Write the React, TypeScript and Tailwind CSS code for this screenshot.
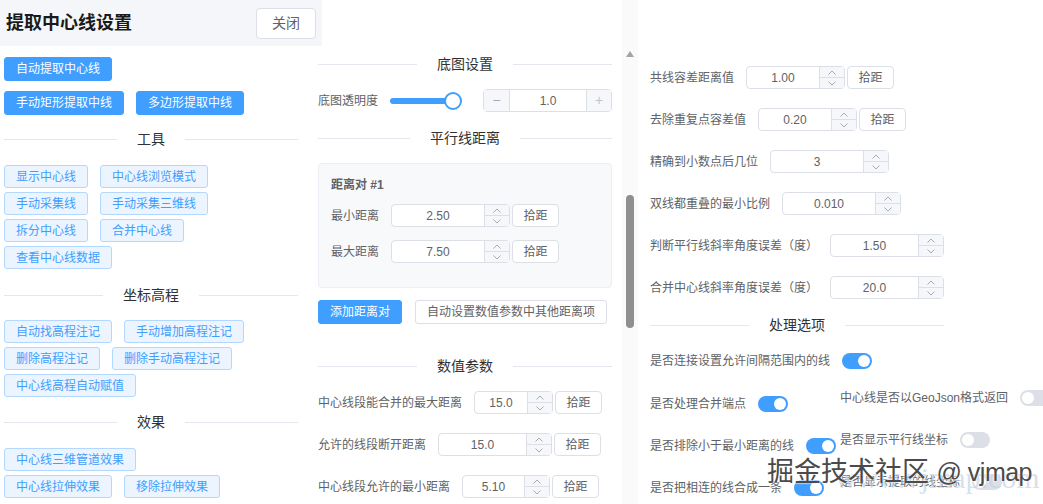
import React from 'react';

const Divider = ({ label }: { label: string }) => (
  <div className="flex h-[20px] w-[294px] items-center">
    <div className="h-px flex-1 bg-[#e4e7ed]" />
    <span className="px-5 text-[14px] leading-none text-[#303133]">{label}</span>
    <div className="h-px flex-1 bg-[#e4e7ed]" />
  </div>
);

const SolidBtn = ({ children }: { children: React.ReactNode }) => (
  <button className="flex h-[24px] items-center rounded-[3px] border border-[#409eff] bg-[#409eff] px-[11px] text-[12px] leading-none text-white">
    {children}
  </button>
);

const PlainBtn = ({ children }: { children: React.ReactNode }) => (
  <button className="flex h-[23px] items-center rounded-[3px] border border-[#b3d8ff] bg-[#ecf5ff] px-[11px] text-[12px] leading-none text-[#409eff]">
    {children}
  </button>
);

const Chevron = ({ up }: { up?: boolean }) => (
  <svg width="8" height="5" viewBox="0 0 8 5" fill="none" stroke="#a8abb2" strokeWidth="1">
    {up ? <path d="M0.5 4.5 L4 1 L7.5 4.5" /> : <path d="M0.5 0.5 L4 4 L7.5 0.5" />}
  </svg>
);

const NumInput = ({ w, value }: { w: string; value: string }) => (
  <div className={`flex h-[23px] ${w} shrink-0 rounded-[4px] border border-[#dcdfe6] bg-white`}>
    <div className="flex flex-1 items-center justify-center text-[12px] text-[#606266]">{value}</div>
    <div className="flex w-[25px] flex-col border-l border-[#dcdfe6] bg-[#f5f7fa]">
      <div className="flex flex-1 items-center justify-center border-b border-[#dcdfe6]">
        <Chevron up />
      </div>
      <div className="flex flex-1 items-center justify-center">
        <Chevron />
      </div>
    </div>
  </div>
);

const PickBtn = () => (
  <button className="ml-[2px] flex h-[23px] w-[47px] shrink-0 items-center justify-center rounded-[4px] border border-[#dcdfe6] bg-white text-[12px] text-[#606266]">
    拾距
  </button>
);

const Row = ({ label, w, value, pick = true }: { label: string; w: string; value: string; pick?: boolean }) => (
  <div className="flex h-[23px] items-center">
    <span className="mr-[12px] whitespace-nowrap text-[12px] text-[#606266]">{label}</span>
    <NumInput w={w} value={value} />
    {pick && <PickBtn />}
  </div>
);

const Switch = ({ on }: { on?: boolean }) => (
  <div
    className={`relative h-[16px] w-[30px] shrink-0 rounded-full ${on ? 'bg-[#409eff]' : 'bg-[#dcdfe6]'}`}
  >
    <div className={`absolute top-[2px] h-[12px] w-[12px] rounded-full bg-white ${on ? 'right-[2px]' : 'left-[2px]'}`} />
  </div>
);

const SwitchItem = ({ label, on }: { label: string; on?: boolean }) => (
  <div className="flex h-[20px] items-center">
    <span className="mr-[12px] whitespace-nowrap text-[12px] text-[#606266]">{label}</span>
    <Switch on={on} />
  </div>
);

export default function App() {
  return (
    <div className="relative flex h-[504px] w-[1043px] overflow-hidden bg-white [font-family:'Liberation_Sans','Noto_Sans_CJK_SC',sans-serif]">
      {/* left panel */}
      <div className="w-[318px] shrink-0">
        <div className="flex h-[46px] w-[322px] items-center justify-between bg-[#f4f6f9] px-[6px]">
          <span className="text-[18px] font-bold text-[#1a1a1a]">提取中心线设置</span>
          <button className="h-[31px] w-[60px] rounded-[4px] border border-[#dcdfe6] bg-white text-[14px] text-[#606266]">
            关闭
          </button>
        </div>
        <div className="pl-[4px] pt-[11px]">
          <div className="flex">
            <SolidBtn>自动提取中心线</SolidBtn>
          </div>
          <div className="mt-[10px] flex gap-[12px]">
            <SolidBtn>手动矩形提取中线</SolidBtn>
            <SolidBtn>多边形提取中线</SolidBtn>
          </div>
          <div className="mt-[14px]">
            <Divider label="工具" />
          </div>
          <div className="mt-[16px] flex flex-col gap-[4px]">
            <div className="flex gap-[12px]">
              <PlainBtn>显示中心线</PlainBtn>
              <PlainBtn>中心线浏览模式</PlainBtn>
            </div>
            <div className="flex gap-[12px]">
              <PlainBtn>手动采集线</PlainBtn>
              <PlainBtn>手动采集三维线</PlainBtn>
            </div>
            <div className="flex gap-[12px]">
              <PlainBtn>拆分中心线</PlainBtn>
              <PlainBtn>合并中心线</PlainBtn>
            </div>
            <div className="flex">
              <PlainBtn>查看中心线数据</PlainBtn>
            </div>
          </div>
          <div className="mt-[16px]">
            <Divider label="坐标高程" />
          </div>
          <div className="mt-[15px] flex flex-col gap-[4px]">
            <div className="flex gap-[12px]">
              <PlainBtn>自动找高程注记</PlainBtn>
              <PlainBtn>手动增加高程注记</PlainBtn>
            </div>
            <div className="flex gap-[12px]">
              <PlainBtn>删除高程注记</PlainBtn>
              <PlainBtn>删除手动高程注记</PlainBtn>
            </div>
            <div className="flex">
              <PlainBtn>中心线高程自动赋值</PlainBtn>
            </div>
          </div>
          <div className="mt-[15px]">
            <Divider label="效果" />
          </div>
          <div className="mt-[16px] flex flex-col gap-[4px]">
            <div className="flex">
              <PlainBtn>中心线三维管道效果</PlainBtn>
            </div>
            <div className="flex gap-[12px]">
              <PlainBtn>中心线拉伸效果</PlainBtn>
              <PlainBtn>移除拉伸效果</PlainBtn>
            </div>
          </div>
        </div>
      </div>

      {/* middle panel */}
      <div className="w-[294px] shrink-0 pt-[54px]">
        <Divider label="底图设置" />
        <div className="mt-[15px] flex h-[23px] items-center">
          <span className="text-[12px] text-[#606266]">底图透明度</span>
          <div className="relative ml-[12px] h-[18px] w-[72px]">
            <div className="absolute left-0 top-[6px] h-[6px] w-[63px] rounded-full bg-[#409eff]" />
            <div className="absolute left-[54px] top-0 h-[18px] w-[18px] rounded-full border-2 border-[#409eff] bg-white" />
          </div>
          <div className="ml-[21px] flex h-[23px] w-[129px] rounded-[4px] border border-[#dcdfe6] bg-white">
            <div className="flex w-[26px] items-center justify-center border-r border-[#dcdfe6] bg-[#f5f7fa] text-[14px] text-[#a8abb2]">
              −
            </div>
            <div className="flex flex-1 items-center justify-center text-[12px] text-[#606266]">1.0</div>
            <div className="flex w-[25px] items-center justify-center border-l border-[#dcdfe6] bg-[#f5f7fa] text-[14px] text-[#c0c4cc]">
              +
            </div>
          </div>
        </div>
        <div className="mt-[16px]">
          <Divider label="平行线距离" />
        </div>
        <div className="mt-[15px] h-[125px] rounded-[4px] border border-[#ebeef5] bg-[#f8f9fb] px-[12px] pt-[13px]">
          <div className="text-[12px] font-bold leading-[17px] text-[#606266]">距离对 #1</div>
          <div className="mt-[10px]">
            <Row label="最小距离" w="w-[119px]" value="2.50" />
          </div>
          <div className="mt-[13px]">
            <Row label="最大距离" w="w-[119px]" value="7.50" />
          </div>
        </div>
        <div className="mt-[12px] flex gap-[13px]">
          <SolidBtn>添加距离对</SolidBtn>
          <button className="flex h-[24px] items-center rounded-[3px] border border-[#dcdfe6] bg-white px-[11px] text-[12px] leading-none text-[#606266]">
            自动设置数值参数中其他距离项
          </button>
        </div>
        <div className="mt-[32px]">
          <Divider label="数值参数" />
        </div>
        <div className="mt-[15px] flex flex-col gap-[19px]">
          <Row label="中心线段能合并的最大距离" w="w-[79px]" value="15.0" />
          <Row label="允许的线段断开距离" w="w-[114px]" value="15.0" />
          <Row label="中心线段允许的最小距离" w="w-[88px]" value="5.10" />
        </div>
      </div>

      {/* scrollbar */}
      <div className="ml-[10px] flex h-full w-[16px] shrink-0 flex-col items-center bg-[#fafafa] pt-[51px]">
        <svg width="8" height="6" viewBox="0 0 8 6">
          <path d="M4 0 L8 6 L0 6 Z" fill="#a3a3a3" />
        </svg>
        <div className="mt-[138px] h-[133px] w-[8px] rounded-full bg-[#8f8f8f]" />
      </div>

      {/* right panel */}
      <div className="ml-[2px] flex-1 pl-[10px] pt-[66px]">
        <div className="flex flex-col gap-[19px]">
          <Row label="共线容差距离值" w="w-[99px]" value="1.00" />
          <Row label="去除重复点容差值" w="w-[99px]" value="0.20" />
          <Row label="精确到小数点后几位" w="w-[119px]" value="3" pick={false} />
          <Row label="双线都重叠的最小比例" w="w-[119px]" value="0.010" pick={false} />
          <Row label="判断平行线斜率角度误差（度）" w="w-[114px]" value="1.50" pick={false} />
          <Row label="合并中心线斜率角度误差（度）" w="w-[114px]" value="20.0" pick={false} />
        </div>
        <div className="mt-[16px]">
          <Divider label="处理选项" />
        </div>
        <div className="mt-[16px]">
          <SwitchItem label="是否连接设置允许间隔范围内的线" on />
        </div>
        <div className="mt-[17px] flex items-end">
          <div className="w-[190px] shrink-0">
            <SwitchItem label="是否处理合并端点" on />
          </div>
          <div className="mb-[6px]">
            <SwitchItem label="中心线是否以GeoJson格式返回" />
          </div>
        </div>
        <div className="mt-[16px] flex items-end">
          <div className="w-[190px] shrink-0">
            <SwitchItem label="是否排除小于最小距离的线" on />
          </div>
          <div className="mb-[6px]">
            <SwitchItem label="是否显示平行线坐标" />
          </div>
        </div>
        <div className="mt-[16px] flex items-end">
          <div className="w-[190px] shrink-0">
            <SwitchItem label="是否把相连的线合成一条" on />
          </div>
          <div className="mb-[6px]">
            <SwitchItem label="是否显示提取的线坐标" />
          </div>
        </div>
      </div>

      {/* watermark */}
      <div className="pointer-events-none absolute left-[835px] top-[463px] whitespace-nowrap text-[30px] leading-none text-[#c5d3e3]/70 [font-family:'Liberation_Serif',serif]">
        www.vjmap.com
      </div>
      <div className="pointer-events-none absolute left-[767px] top-[454px] whitespace-nowrap text-[27px] leading-[36px] text-[#4a4a4a] [text-shadow:0_0_2px_#fff,0_0_2px_#fff]">
        掘金技术社区 <span className="text-[25px] tracking-[-0.5px]">@ vjmap</span>
      </div>
    </div>
  );
}
